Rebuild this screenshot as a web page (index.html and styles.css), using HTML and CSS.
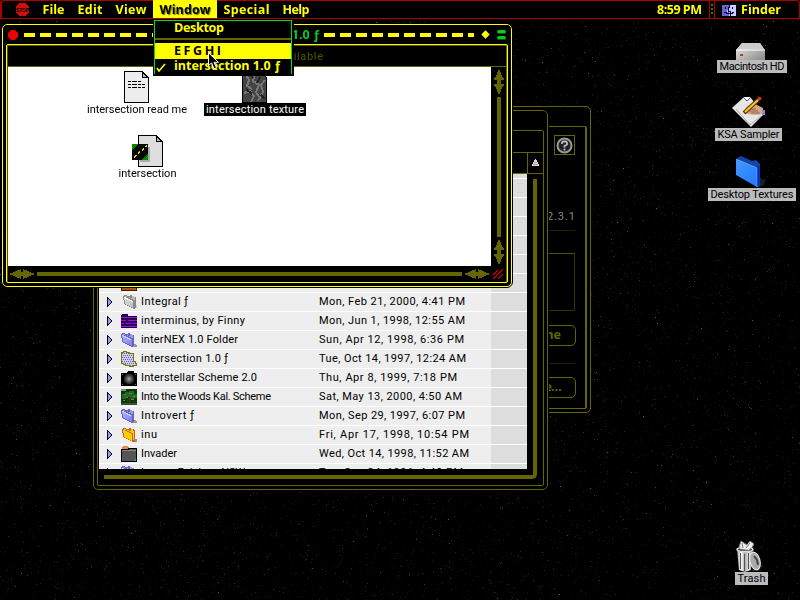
FILE: index.html
```
<!DOCTYPE html>
<html lang="en">
<head>
<meta charset="utf-8">
<title>Finder</title>
<link rel="stylesheet" href="styles.css">
</head>
<body>
<svg class="defs" width="0" height="0">
  <defs>
    <linearGradient id="gFold" x2="1" y2="1"><stop offset="0" stop-color="#aaf"/><stop offset=".5" stop-color="#99f"/><stop offset="1" stop-color="#77d"/></linearGradient>
    <linearGradient id="gGray" x2="1" y2="1"><stop offset="0" stop-color="#ddd"/><stop offset="1" stop-color="#bbb"/></linearGradient>
    <linearGradient id="gBlue" x2="1" y2="1"><stop offset="0" stop-color="#49f"/><stop offset="1" stop-color="#27f"/></linearGradient>
    <linearGradient id="gHd" y2="1" x2="1"><stop offset="0" stop-color="#eee"/><stop offset="1" stop-color="#888"/></linearGradient>
    <linearGradient id="gCan"><stop offset="0" stop-color="#999"/><stop offset=".25" stop-color="#fff"/><stop offset=".5" stop-color="#aaa"/><stop offset=".75" stop-color="#eee"/><stop offset="1" stop-color="#555"/></linearGradient>
    <radialGradient id="gStar"><stop offset="0" stop-color="#aaa"/><stop offset=".5" stop-color="#555"/><stop offset="1" stop-color="#111"/></radialGradient>
    <pattern id="pDots" width="2" height="4" patternUnits="userSpaceOnUse"><rect width="2" height="4" fill="#ccf"/><rect width="1" height="1" fill="#669"/><rect x="1" y="2" width="1" height="1" fill="#669"/></pattern>
    <symbol id="plain" viewBox="0 0 16 16"><path d="M12 12h3v1h1v2h-4z" fill="#999"/><path d="M0 2h1V1h3v1h3V1h2v1h2v1h2v11h-1v1h-2v-1H8v-1H6v-1H4v-1H2v-1H1V6H0z" fill="#66b"/><path d="M1 3h2v1h2v1h2v1h2v1h2v7h-1v-1H8v-1H6v-1H4v-1H2V6H1z" fill="url(#gFold)"/><path d="M2 2h2v1h3v1h2V2h2v1h1v3h-2V5H8V4H6V3H2z" fill="#99e"/><path d="M1 3h2v1h2v1h2v1h2v1h1v1H8V7H6V6H4V5H2V4H1z" fill="#ccf"/></symbol>
    <symbol id="gray" viewBox="0 0 16 16"><path d="M14 11h2v3h-2z" fill="#ccc"/><path d="M2 2h1V1h3v1h3V1h2v1h2v1h2v11h-1v1h-2v-1h-2v-1H8v-1H6v-1H4v-1H3V6H2z" fill="#888"/><path d="M3 3h2v1h2v1h2v1h2v1h1v7h-1v-1H9v-1H7v-1H5v-1H4V6H3z" fill="url(#gGray)"/><path d="M4 2h2v1h3v1h2V2h2v1h1v3h-2V5h-2V4H8V3H4z" fill="#bbb"/><path d="M3 3h2v1h2v1h2v1h2v1h1v1h-2V7H8V6H6V5H4V4H3z" fill="#fff"/></symbol>
    <symbol id="orange" viewBox="0 0 16 16"><path d="M13 12h3v3h-3z" fill="#b85"/><path d="M1 2h1V1h3v1h3V1h2v1h3v1h1v12h-3v-1H9v-1H7v-1H5v-1H3v-1H2V6H1z" fill="#b63"/><path d="M2 3h2v1h2v1h2v1h2v1h1v7h-1v-1H8v-1H6v-1H4v-1H3V6H2zM3 2h2v1h3v1h2V2h2v2h1v9h-1V6h-2V5H8V4H6V3H3z" fill="#fc0"/></symbol>
    <symbol id="purple" viewBox="0 0 16 16"><path d="M0 2h1V1h6v2h9v12H0z" fill="#204"/><path d="M0 4.500h16M0 7.500h5M7 7.500h9M0 10.500h3M5 10.500h5M12 10.500h4M0 13.500h16" stroke="#a0f"/><path d="M0 6h4M5 6h4M12 6h4M1 9h13M0 12h6M8 12h8" stroke="#306"/></symbol>
    <symbol id="dotted" viewBox="0 0 16 16"><path d="M.5 1.500h2v-1h3v1h3v1h4v8h2v2h1v2h-3v1h-4v-1h-4v-1h-2v-1h-2z" fill="url(#pDots)" stroke="#770"/></symbol>
    <symbol id="star" viewBox="0 0 16 16"><path d="M0 3h5l2-2h6v2h3v13H0z" fill="#000"/><circle cx="8" cy="9" r="5.500" fill="url(#gStar)"/><path d="M1 4h1M14 4h1M1 14h1M14 14h1" stroke="#666"/></symbol>
    <symbol id="woods" viewBox="0 0 16 16"><rect width="16" height="16" fill="#131"/><path d="M0 0h5v2H0z" fill="#797"/><path d="M1 5h3V3h4V2h5v3h3v4h-3v1H9V8H5v2H1z" fill="#262"/><path d="M3 5h2M8 4h3M12 7h2M5 8h2M2 11h2M10 10h3" stroke="#493"/><path d="M8 9v5M6 12l2-2 3-2" stroke="#531" fill="none"/><path d="M0 14h16v2H0z" fill="#352"/></symbol>
    <symbol id="invader" viewBox="0 0 16 16"><path d="M2 0h4l2 2v2H1V1z" fill="#d85"/><path d="M.5 3.500h6l2-1h7v13H.5z" fill="#555" stroke="#000"/><path d="M1.500 4.500h13" stroke="#888"/><path d="M15 12v3h-3z" fill="#0af"/></symbol>
    <symbol id="brown" viewBox="0 0 16 16"><path d="M.5 2.500h15v13H.5z" fill="#a52" stroke="#420"/></symbol>
    <symbol id="tri" viewBox="0 0 7 12"><path d="M1.500 1v10M1.500 1.500L6 6l-4.500 4.500" fill="#99f" stroke="#000"/></symbol>
    <symbol id="vpair" viewBox="0 0 12 24"><path d="M5 0h2v2h1v3h1v2h1v1h1v2H8v4h3v2h-1v1H9v2H8v3H7v3H5v-3H4v-3H3v-2H2v-1H1v-2h3v-4H1V8h1V7h1V5h1V2h1z" fill="#660"/></symbol>
    <symbol id="hpair" viewBox="0 0 24 10"><path d="M0 4h3V3h2V2h2V1h3V0h1v3h2V0h1v1h3v1h2v1h2v1h3v2h-3v1h-2v1h-2v1h-3v1h-1V7h-2v3h-1V9H7V8H5V7H3V6H0z" fill="#660"/></symbol>
    <symbol id="doc" viewBox="0 0 25 32"><path d="M.5.5h18l6 6v25H.5z" fill="#ededed" stroke="#000"/><path d="M18.500 1v5.500H24z" fill="#bbb" stroke="#000"/></symbol>
  </defs>
</svg>
<canvas id="sky" class="sky" width="800" height="600"></canvas>

<section class="win win-info">
  <div class="inner">
    <div class="info-top"><span class="help"><svg width="17" height="17" viewBox="0 0 17 17"><circle cx="8.500" cy="8.500" r="7" fill="#222" stroke="#999" stroke-width="2"/><path d="M6 7V5.500L7 4.500h3l1 1v2L8.500 9v1.500M8.500 11.500v2" fill="none" stroke="#bbb" stroke-width="1.800"/></svg></span></div>
    <div class="version"><span data-w="38">v 2.3.1</span></div>
    <div class="group"></div>
    <div class="btn btn-a">Rename</div>
    <div class="divider"></div>
    <div class="btn btn-b"><span data-w="40">More…</span></div>
  </div>
</section>

<section class="win win-list">
  <div class="inner">
    <div class="status"></div>
    <div class="heads"><i></i><b><svg width="9" height="8" viewBox="0 0 9 8"><path d="M4 0h1v1h1v2h1v2h1v2H1V5h1V3h1V1h1z" fill="#ddd"/><path d="M3 3.500h3M2 5.500h5" stroke="#777" stroke-width=".6"/></svg></b></div>
    <div class="list-area">
      <div class="rows" id="rows"></div>
      <div class="list-track"></div>
    </div>
  </div>
</section>

<section class="win win-front">
  <header class="title">
    <svg width="10" height="10" viewBox="0 0 10 10"><path d="M3 0h4l3 3v4l-3 3H3L0 7V3z" fill="#e00"/></svg>
    <i class="dashes dashes-l"></i>
    <span data-w="107">intersection 1.0 ƒ</span>
    <i class="dashes dashes-r"></i>
    <svg width="9" height="9" viewBox="0 0 9 9"><path d="M4.500.300l4.200 4.200-4.200 4.200L.3 4.500z" fill="#ff0"/></svg>
    <b class="shade"><i></i><i></i></b>
  </header>
  <div class="inner">
    <div class="space"><span data-w="134">3 items, 52 MB available</span></div>
    <div class="mid">
      <div class="content">
        <figure><svg width="25" height="32" shape-rendering="crispEdges"><use href="#doc"/><path d="M4 10.500h13M4 13.500h17M4 16.500h17" stroke="#000" stroke-dasharray="3 1 5 1"/></svg><figcaption><span data-w="100">intersection read me</span></figcaption></figure>
        <figure><svg width="25" height="32" shape-rendering="crispEdges"><use href="#doc"/><path d="M1 1h17l6 6v24H1z" fill="#444"/><path d="M3 2l4 7-2 6 5 3M13 1l-2 9 6 4-3 7 3 5M23 9l-4 5 2 7-5 9M2 22l6-2 4 5-3 6" stroke="#777" fill="none" stroke-width="2"/><path d="M8 2l3 5M4 18l6 5M18 6l-3 6M19 24l4 4" stroke="#222" stroke-width="2"/></svg><figcaption class="sel"><span data-w="98">intersection texture</span></figcaption></figure>
        <figure class="f-int"><svg width="31" height="32" shape-rendering="crispEdges"><path d="M6.500.500h18l6 6v25h-24z" fill="#ddd" stroke="#000"/><path d="M24.500 1v5.500H30z" fill="#bbb" stroke="#000"/><path d="M8 12h10v15H8z" fill="#aaa"/><path d="M0 9h16v16H0z" fill="#080"/><path d="M6 9h10v9l-7 7H0V15z" fill="#000"/><path d="M2 22L15 11" stroke="#dd0" stroke-width="1.500" stroke-dasharray="3 2"/></svg><figcaption><span data-w="58">intersection</span></figcaption></figure>
      </div>
      <div class="vbar"><svg width="12" height="24"><use href="#vpair"/></svg><i></i><svg width="12" height="24"><use href="#vpair"/></svg></div>
    </div>
    <div class="hbar"><svg width="24" height="10"><use href="#hpair"/></svg><i></i><svg width="24" height="10"><use href="#hpair"/></svg><svg class="grip" width="11" height="10"><path d="M0 6l5-5M0 10L10 0M5 10l5-5" stroke="#d00" stroke-width="1.200"/></svg></div>
  </div>
</section>

<nav class="bar">
  <svg class="stop" width="15" height="15" viewBox="0 0 15 15"><path d="M4.500 1h6L14 4.500v6L10.500 14h-6L1 10.500v-6z" fill="#c11"/><text x="1" y="10" textLength="13" lengthAdjust="spacingAndGlyphs">STOP</text></svg>
  <span class="m"><span data-w="22">File</span></span><span class="m"><span data-w="25">Edit</span></span><span class="m"><span data-w="31">View</span></span><span class="m on"><span data-w="51">Window</span></span><span class="m"><span data-w="46">Special</span></span><span class="m"><span data-w="27">Help</span></span>
  <span class="clock"><span data-w="45">8:59 PM</span></span>
  <i class="dots"></i>
  <span class="app"><svg width="14" height="11" viewBox="0 0 14 11" shape-rendering="crispEdges"><path d="M0 0h14v11H0z" fill="#ccf"/><path d="M0 0h7v5H5v2h2v4H0z" fill="#66c"/><path d="M3.500 2v2M10.500 2v2M7.500 0v2h-1v4h2v5M2 7.500h2v1h6v-1h2" stroke="#003" fill="none"/></svg><span data-w="40">Finder</span></span>
</nav>

<div class="menu">
  <div class="mi"><i></i><span data-w="50">Desktop</span></div>
  <hr>
  <div class="mi hot"><i></i><span data-w="47">E F G H I</span></div>
  <div class="mi last"><i><svg width="10" height="9" viewBox="0 0 10 9"><path d="M1 5l2 3 6-7" stroke="#ff0" stroke-width="1.600" fill="none"/></svg></i><span data-w="107">intersection 1.0 ƒ</span></div>
</div>
<svg class="cursor" width="12" height="18" viewBox="0 0 12 18"><path d="M.5.800v13l3-3 2.500 6 2.500-1-2.500-5.500h4.500z" fill="#000" stroke="#fff"/></svg>

<div class="desk d-hd"><svg width="30" height="17"><path d="M6 0h18l5 7v10H0V7z" fill="url(#gHd)"/><path d="M6 0h18l4 6H1z" fill="#ccc"/><path d="M0 7h29" stroke="#fff"/><path d="M4 11h3v2H4z" fill="#d22"/><path d="M4 11h1v1H4z" fill="#0c0"/></svg><b><span data-w="65">Macintosh HD</span></b></div>
<div class="desk d-ksa"><svg width="34" height="32"><path d="M0 12L12 1h6l14 17-13 13z" fill="#e6e6e6"/><path d="M11 1l4 4 4-4" fill="#fff" stroke="#555"/><path d="M4 13l14 16 11-9" fill="none" stroke="#aaa"/><path d="M14 11l6-4 3 1 8 4v6l-7 1-9-1-2-3z" fill="#d9a684"/><path d="M16 13h8M17 15h9M19 17h9" stroke="#864"/><path d="M30 14h3v5h-3z" fill="#88d"/><path d="M12 17L27 3" stroke="#630" stroke-width="4"/><path d="M13 16L26 4" stroke="#ec3" stroke-width="2"/><path d="M26 1h3v3h-3z" fill="#e23"/></svg><b><span data-w="62">KSA Sampler</span></b></div>
<div class="desk d-tex"><svg width="31" height="32"><path d="M22 22l8 2-3 6-5 1z" fill="#122"/><path d="M1 2l4-2 11 5 4-1 4 4v22l-3 1z" fill="#14a"/><path d="M0 3l21 9v19L0 19z" fill="url(#gBlue)"/><path d="M0 3l21 9v19" fill="none" stroke="#7bf" stroke-width=".7"/><path d="M22.500 10v20" stroke="#12b" stroke-width="2"/></svg><b><span data-w="83">Desktop Textures</span></b></div>
<div class="desk d-trash"><svg width="28" height="32"><path d="M18 23l9 2-4 6h-7z" fill="#222"/><path d="M3 7l2-6 3 2 3 2 3-4 4 3-3 5z" fill="#eee" stroke="#777"/><path d="M1 9h16l-2 21-6 2-6-2z" fill="url(#gCan)"/><path d="M4.500 13v16M8.500 14v17M12.500 13v16" stroke="#555"/><ellipse cx="9" cy="9.500" rx="8" ry="2" fill="#444" stroke="#ddd" stroke-width="1.500"/><path d="M4 9l2-7 4 4 4-4 3 2-4 6z" fill="#eee"/><path d="M6 3l1 5M14 3l-4 5" stroke="#777"/><ellipse cx="19" cy="21" rx="5" ry="9" transform="rotate(-15 19 21)" fill="#aaa" stroke="#eee"/><path d="M18 16l3 4 1 5" stroke="#444" stroke-width="2" fill="none"/></svg><b><span data-w="28">Trash</span></b></div>
<script src="script.js"></script>
</body>
</html>
```
FILE: styles.css
```
* { box-sizing: border-box; }
body { margin: 0; width: 800px; height: 600px; overflow: hidden; background: #000; font: 11px/14px Roboto, sans-serif; color: #000; position: relative; }
svg { display: block; flex: none; }
.defs, .sky { position: absolute; left: 0; top: 0; }
[data-w] { display: inline-block; white-space: pre; }

/* menu bar */
.bar { position: absolute; inset: 0 0 auto 0; height: 19px; display: flex; align-items: stretch; background: #000; border: 1px solid #a00; border-left-width: 2px; border-radius: 4px 4px 0 0; color: #ff0; font: 700 12.500px/17px "Open Sans", sans-serif; }
.stop { margin: 1px 6px 0 13px; }
.stop text { font: 700 6px "Liberation Sans", sans-serif; fill: #000; }
.m { padding: 0 6.500px; }
.m.on { background: #ff0; color: #000; margin-top: -1px; padding-top: 1px; text-shadow: 1px 1px 1px #770; }
.clock { margin-left: auto; padding-right: 7px; }
.dots { width: 6px; border: solid #a00; border-width: 0 1px; background: repeating-linear-gradient(#660 0 2px, #000 2px 4px) content-box; padding: 3px 1px; }
.app { display: flex; width: 84px; padding-left: 7px; gap: 5px; }
.app svg { margin-top: 4px; }

/* open menu */
.menu { position: absolute; left: 153px; top: 19px; width: 141px; height: 57px; background: linear-gradient(#0d2,#0d2) 1px 1px/138px 1px no-repeat, linear-gradient(#0d2,#0d2) 1px 1px/1px 54px no-repeat, linear-gradient(#0d2,#0d2) 138px 1px/1px 54px no-repeat, #000; color: #ff0; font: 700 12.500px/16px "Open Sans", sans-serif; padding: 1px 3px 0 2px; }
.mi { display: flex; height: 16px; }
.mi > i { width: 19px; padding: 4px 0 0 1px; }
.menu hr { margin: 3px 0 3px; border: 0; height: 2px; background: #660; }
.mi:first-child { height: 15px; }
.mi.hot { background: #ff0; color: #000; line-height: 15px; }
.mi.last { line-height: 14px; }
.cursor { position: absolute; left: 208px; top: 52px; }

/* windows */
.win { position: absolute; background: #000; border: 1px solid #660; border-radius: 5px; isolation: isolate; }
.inner { border: 1px solid #660; border-radius: 2px; overflow: hidden; display: flex; flex-direction: column; }
.win-info { left: 300px; top: 106px; width: 291px; height: 307px; padding: 19px 3px 3px; }
.win-info .inner { height: 100%; border-right-width: 2px; padding: 8px 10px 0 0; align-items: flex-end; }
.help { display: grid; place-items: center; width: 21px; height: 20px; border: 1px solid #660; }
.version { margin-top: 55px; color: #888; width: 100%; text-align: right; border-bottom: 1px solid #220; height: 21px; }
.group { margin-top: 22px; width: 100px; height: 58px; border: 1px solid #330; border-top-color: #550; }
.btn { border: 1px solid #660; border-radius: 5px; width: 90px; height: 21px; color: #660; font: 700 12.500px/18px "Open Sans", sans-serif; text-align: right; margin-right: -1px; }
.btn-a { margin-top: 14px; padding-right: 14px; }
.divider { width: 100%; height: 1px; background: #220; margin: 17px 0 13px; }
.btn-b { padding-right: 14px; }

.win-list { left: 93px; top: 110px; width: 455px; height: 380px; padding: 19px 3px 3px; outline: 1px solid #000; }
.win-list .inner { height: 100%; }
.status { height: 22px; }
.heads { display: flex; height: 22px; border: solid #660; border-width: 1px 0; flex: none; }
.heads i { flex: 1; }
.heads b { width: 16px; border-left: 1px solid #660; padding: 6px 0 0 3px; }
.list-area { position: relative; padding: 0 16px 16px 1px; height: 311px; }
.list-track { position: absolute; left: 6px; right: 6px; top: 5px; bottom: 6px; border: solid #660; border-width: 0 4px 4px 0; border-radius: 0 0 5px 0; }
.rows { height: 295px; overflow: hidden; background: #eee; position: relative; z-index: 1; }
.row { display: grid; grid-template-columns: 7px 24px 177px 172px 1fr; height: 19px; border-top: 1px solid #fff; padding-left: 7px; line-height: 18px; }
.row:first-child { margin-top: -15px; }
.row .tri { margin-top: 3px; }
.row .ic { margin: 1px 0 0 8px; }
.row span { margin-left: 4px; }
.row .date { margin-left: 5px; }
.row u { background: #ddd; margin-left: 5px; }

.win-front { left: 2px; top: 24px; width: 510px; height: 263px; border-color: #ff0; padding: 0 3px; outline: 1px solid #000; }
.title { display: flex; height: 19px; align-items: center; padding: 0 2px 0 2px; color: #0c2; font: 700 12.500px/18px "Open Sans", sans-serif; }
.dashes { height: 4px; background: repeating-linear-gradient(90deg, #ff0 0 11px, #000 11px 16px); }
.dashes-l { width: 181px; margin: 0 8px 0 6px; }
.dashes-r { width: 150px; margin: 0 7px 0 4px; }
.shade { margin-left: 7px; display: grid; gap: 2px; }
.shade i { width: 9px; height: 4px; border-radius: 2px; background: #0c2; border-bottom: 1px solid #060; }
.win-front .inner { height: 239px; border-color: #ff0; box-shadow: inset 1px 1px #550, inset -1px 0 #660; padding-left: 1px; }
.space { height: 22px; border-bottom: 1px solid #660; color: #550; text-align: right; padding: 5px 184px 0 0; flex: none; }
.mid { display: flex; height: 199px; }
.content { width: 483px; background: #fff; display: grid; grid-template: 64px 1fr / 118px 118px; padding: 4px 0 0 70px; align-content: start; }
figure { margin: 0; display: flex; flex-direction: column; align-items: center; }
figure:not(.f-int) svg { margin-right: 1px; }
.f-int { padding-left: 21px; }
figcaption { height: 13px; line-height: 13px; padding: 0 2px; }
.sel { background: #000; color: #fff; }
.vbar { width: 16px; padding: 3px 2px 2px; display: flex; flex-direction: column; gap: 3px; }
.vbar i { flex: 1; width: 4px; margin-left: 4px; background: #660; }
.hbar { display: flex; align-items: center; gap: 3px; height: 16px; padding: 0 3px 0 2px; }
.hbar i { flex: 1; height: 4px; background: #660; }
.grip { margin-left: 1px; }

/* desktop icons */
.desk { position: absolute; display: flex; flex-direction: column; align-items: center; }
.desk b { font-weight: 400; background: #bbb; height: 13px; line-height: 13px; padding: 0 2.500px; }
.d-hd { left: 717px; top: 43px; }
.d-hd svg { margin-right: 3px; }
.d-ksa { left: 715px; top: 96px; }
.d-tex { left: 708px; top: 156px; }
.d-tex svg { margin-right: 2px; }
.d-trash { left: 735px; top: 540px; }
.d-trash svg { margin-right: 3px; }
```
FILE: script.js
```
const files = [
  ['', '', '', 0, 0], ['', '', '', 0, 0], ['', '', '', 0, 0], ['', '', '', 0, 0], ['', '', '', 0, 0], ['', '', '', 0, 0],
  ['brown', '', '', 0, 0],
  ['gray', 'Integral ƒ', 'Mon, Feb 21, 2000, 4:41 PM', 47, 146],
  ['purple', 'interminus, by Finny', 'Mon, Jun 1, 1998, 12:55 AM', 104, 146],
  ['plain', 'interNEX 1.0 Folder', 'Sun, Apr 12, 1998, 6:36 PM', 97, 145],
  ['dotted', 'intersection 1.0 ƒ', 'Tue, Oct 14, 1997, 12:24 AM', 87, 147],
  ['star', 'Interstellar Scheme 2.0', 'Thu, Apr 8, 1999, 7:18 PM', 116, 138],
  ['woods', 'Into the Woods Kal. Scheme', 'Sat, May 13, 2000, 4:50 AM', 130, 143],
  ['plain', 'Introvert ƒ', 'Mon, Sep 29, 1997, 6:07 PM', 53, 146],
  ['orange', 'inu', 'Fri, Apr 17, 1998, 10:54 PM', 16, 150],
  ['invader', 'Invader', 'Wed, Oct 14, 1998, 11:52 AM', 36, 150],
  ['plain', 'Inverse Rainbow NSW', 'Tue, Sep 24, 1996, 4:40 PM', 104, 144]
];
document.getElementById('rows').innerHTML = files.map(([icon, name, date, nw, dw]) =>
  '<div class="row"><svg class="tri" width="7" height="12">' + (icon ? '<use href="#tri"/>' : '') + '</svg>' +
  '<svg class="ic" width="16" height="16" shape-rendering="crispEdges">' + (icon ? '<use href="#' + icon + '"/>' : '') + '</svg>' +
  '<span' + (name ? ' data-w="' + nw + '"' : '') + '>' + name + '</span>' +
  '<span class="date"' + (date ? ' data-w="' + dw + '"' : '') + '>' + date + '</span><u></u></div>').join('');

// Track each label out to its bitmap-font width.
document.querySelectorAll('[data-w]').forEach(el => {
  const range = document.createRange();
  range.selectNodeContents(el);
  const natural = range.getBoundingClientRect().width;
  const target = +el.dataset.w;
  el.style.letterSpacing = (target - natural) / (el.textContent.length - 1) + 'px';
  el.style.width = target + 'px';
});

// Starfield
const ctx = document.getElementById('sky').getContext('2d');
let seed = 7;
const rnd = () => (seed = (seed * 16807) % 2147483647) / 2147483647;
for (let i = 0; i < 16000; i++) {
  const v = 10 + 36 * Math.pow(rnd(), 3), t = () => Math.round(v * (0.4 + 1.1 * rnd()));
  ctx.fillStyle = 'rgb(' + t() + ',' + t() + ',' + t() + ')';
  ctx.fillRect(Math.floor(rnd() * 800), Math.floor(rnd() * 600), 1, 1);
}
for (let i = 0; i < 450; i++) {
  const v = 50 + 50 * rnd(), t = () => Math.round(v * (0.5 + 0.7 * rnd()));
  ctx.fillStyle = 'rgb(' + t() + ',' + t() + ',' + t() + ')';
  ctx.fillRect(Math.floor(rnd() * 800), Math.floor(rnd() * 600), 1, 1);
}
```
